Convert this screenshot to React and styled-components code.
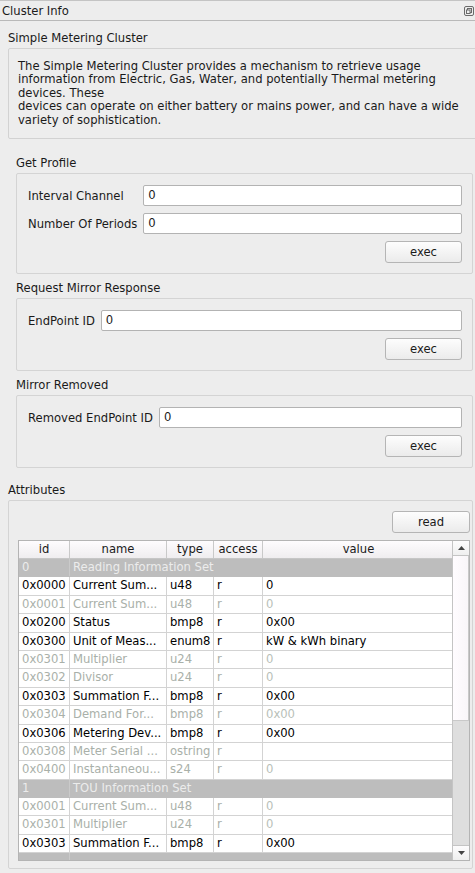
import React from "react";
import styled, { createGlobalStyle } from "styled-components";

const GlobalStyle = createGlobalStyle`
  html, body {
    margin: 0;
    padding: 0;
    background: #ededed;
  }
  body {
    font-family: "DejaVu Sans", "Liberation Sans", sans-serif;
    font-size: 11.6px;
    color: #1a1a1a;
  }
`;

const Page = styled.div`
  width: 475px;
  height: 873px;
  overflow: hidden;
  background: #ededed;
  display: flex;
  flex-direction: column;
`;

const TitleBar = styled.div`
  height: 19px;
  border-top: 1px solid #c4c4c4;
  border-bottom: 1px solid #b9b9b9;
  display: flex;
  align-items: center;
  justify-content: space-between;
  padding: 0 1px 0 2px;
`;

const Content = styled.div`
  padding: 0 0 0 8px;
  display: flex;
  flex-direction: column;
  overflow: hidden;
`;

const SectionLabel = styled.div`
  height: 20px;
  line-height: 20px;
  margin-left: ${(p) => p.indent || 0}px;
  margin-top: ${(p) => p.top || 0}px;
  white-space: nowrap;
`;

const DescBox = styled.div`
  width: 480px;
  box-sizing: border-box;
  height: 91px;
  border: 1px solid #d2d2d2;
  border-radius: 2px;
  padding: 11px 0 0 9px;
  line-height: 13.4px;
  white-space: nowrap;
`;

const GroupBox = styled.div`
  margin-left: ${(p) => p.indent || 0}px;
  width: ${(p) => p.width}px;
  box-sizing: border-box;
  border: 1px solid #d4d4d4;
  border-radius: 2px;
  padding: ${(p) => p.pad || "11px 10px 10px 11px"};
  display: flex;
  flex-direction: column;
  gap: 7px;
`;

const FieldGrid = styled.div`
  display: grid;
  grid-template-columns: auto 1fr;
  column-gap: 6px;
  row-gap: 7px;
  align-items: center;
`;

const FieldLabel = styled.span`
  white-space: nowrap;
`;

const Input = styled.div`
  height: 21px;
  box-sizing: border-box;
  background: #fff;
  border: 1px solid #b3b3b3;
  border-radius: 2px;
  padding-left: 4px;
  line-height: 19px;
`;

const Button = styled.div`
  align-self: flex-end;
  width: ${(p) => p.w || 77}px;
  height: 22px;
  box-sizing: border-box;
  border: 1px solid #b5b5b5;
  border-radius: 3px;
  background: linear-gradient(#fdfdfd, #ebebeb);
  text-align: center;
  line-height: 20px;
`;

const AttrBox = styled.div`
  height: 369px;
  width: 465px;
  box-sizing: border-box;
  border: 1px solid #d4d4d4;
  border-radius: 2px;
  padding: 10px 2px 0 9px;
  display: flex;
  flex-direction: column;
  gap: 7px;
`;

const TableFrame = styled.div`
  height: 321px;
  box-sizing: border-box;
  border: 1px solid #b4b4b4;
  display: flex;
  overflow: hidden;
  background: #fff;
`;

const TableBody = styled.div`
  width: 435px;
  display: flex;
  flex-direction: column;
  overflow: hidden;
`;

const COLS = "51px 97px 47px 49px 191px";

const HeaderRow = styled.div`
  display: grid;
  grid-template-columns: ${COLS};
  height: 18px;
  flex: none;
  background: linear-gradient(#fefcfe, #efedef);
  border-bottom: 1px solid #c6c6c6;
  box-sizing: border-box;
`;

const HeaderCell = styled.div`
  text-align: center;
  line-height: 17px;
  border-right: 1px solid #c9c9c9;
  &:last-child {
    border-right: none;
  }
`;

const Row = styled.div`
  display: grid;
  grid-template-columns: ${COLS};
  height: 18.4px;
  flex: none;
  box-sizing: border-box;
  background: ${(p) => (p.group ? "#bdbdbd" : "#fff")};
  border-bottom: 1px solid ${(p) => (p.group ? "#bdbdbd" : "#d3d3d3")};
  color: ${(p) => (p.group ? "#ececec" : p.dim ? "#a9b0a9" : "#000")};
`;

const Cell = styled.div`
  padding-left: 3px;
  line-height: 17.4px;
  white-space: nowrap;
  overflow: hidden;
  border-right: 1px solid ${(p) => (p.group ? "#cacaca" : "#d3d3d3")};
  grid-column: ${(p) => p.span || "auto"};
  color: ${(p) => (p.faint ? "#b8c0b8" : "inherit")};
  &:last-child {
    border-right: none;
  }
`;

const Scrollbar = styled.div`
  width: 16px;
  border-left: 1px solid #c4c4c4;
  background: #dedede;
  display: flex;
  flex-direction: column;
`;

const ScrollButton = styled.div`
  height: 14px;
  flex: none;
  background: linear-gradient(#fdfcfd, #efefef);
  border-bottom: ${(p) => (p.down ? "none" : "1px solid #c4c4c4")};
  border-top: ${(p) => (p.down ? "1px solid #c4c4c4" : "none")};
  display: flex;
  align-items: center;
  justify-content: center;
`;

const Handle = styled.div`
  height: 165px;
  flex: none;
  box-sizing: border-box;
  background: linear-gradient(90deg, #fffcff, #f9f6f9);
  border: 1px solid #c9c9c9;
  border-top: none;
  border-left: none;
`;

const Track = styled.div`
  flex: 1;
`;

const FloatIcon = () => (
  <svg width="10" height="10" viewBox="0 0 10 10">
    <rect x="0.5" y="0.5" width="9" height="9" rx="1.5" fill="none" stroke="#6a6a6a" />
    <rect x="3.5" y="2.5" width="4" height="4" fill="none" stroke="#6a6a6a" />
    <rect x="2.5" y="4" width="3.5" height="3.5" fill="#ededed" stroke="#6a6a6a" />
  </svg>
);

const Arrow = ({ down }) => (
  <svg width="7" height="4" viewBox="0 0 7 4">
    <polygon points={down ? "0,0 7,0 3.5,4" : "0,4 7,4 3.5,0"} fill="#444" />
  </svg>
);

const rows = [
  { group: true, id: "0", name: "Reading Information Set" },
  { id: "0x0000", name: "Current Sum...", type: "u48", access: "r", value: "0" },
  { id: "0x0001", name: "Current Sum...", type: "u48", access: "r", value: "0", dim: true },
  { id: "0x0200", name: "Status", type: "bmp8", access: "r", value: "0x00" },
  { id: "0x0300", name: "Unit of Meas...", type: "enum8", access: "r", value: "kW & kWh binary" },
  { id: "0x0301", name: "Multiplier", type: "u24", access: "r", value: "0", dim: true },
  { id: "0x0302", name: "Divisor", type: "u24", access: "r", value: "0", dim: true },
  { id: "0x0303", name: "Summation F...", type: "bmp8", access: "r", value: "0x00" },
  { id: "0x0304", name: "Demand For...", type: "bmp8", access: "r", value: "0x00", dim: true },
  { id: "0x0306", name: "Metering Dev...", type: "bmp8", access: "r", value: "0x00" },
  { id: "0x0308", name: "Meter Serial ...", type: "ostring", access: "r", value: "", dim: true },
  { id: "0x0400", name: "Instantaneou...", type: "s24", access: "r", value: "0", dim: true },
  { group: true, id: "1", name: "TOU Information Set" },
  { id: "0x0001", name: "Current Sum...", type: "u48", access: "r", value: "0", dim: true },
  { id: "0x0301", name: "Multiplier", type: "u24", access: "r", value: "0", dim: true },
  { id: "0x0303", name: "Summation F...", type: "bmp8", access: "r", value: "0x00" },
  { group: true, id: "", name: "" },
];

export default function App() {
  return (
    <Page>
      <GlobalStyle />
      <TitleBar>
        <span>Cluster Info</span>
        <FloatIcon />
      </TitleBar>
      <Content>
        <SectionLabel top={7}>Simple Metering Cluster</SectionLabel>
        <DescBox>
          The Simple Metering Cluster provides a mechanism to retrieve usage
          <br />
          information from Electric, Gas, Water, and potentially Thermal metering
          <br />
          devices. These
          <br />
          devices can operate on either battery or mains power, and can have a wide
          <br />
          variety of sophistication.
        </DescBox>

        <SectionLabel indent={8} top={14}>Get Profile</SectionLabel>
        <GroupBox indent={8} width={457}>
          <FieldGrid>
            <FieldLabel>Interval Channel</FieldLabel>
            <Input>0</Input>
            <FieldLabel>Number Of Periods</FieldLabel>
            <Input>0</Input>
          </FieldGrid>
          <Button>exec</Button>
        </GroupBox>

        <SectionLabel indent={8} top={4}>Request Mirror Response</SectionLabel>
        <GroupBox indent={8} width={457}>
          <FieldGrid>
            <FieldLabel>EndPoint ID</FieldLabel>
            <Input>0</Input>
          </FieldGrid>
          <Button>exec</Button>
        </GroupBox>

        <SectionLabel indent={8} top={4}>Mirror Removed</SectionLabel>
        <GroupBox indent={8} width={457}>
          <FieldGrid>
            <FieldLabel>Removed EndPoint ID</FieldLabel>
            <Input>0</Input>
          </FieldGrid>
          <Button>exec</Button>
        </GroupBox>

        <SectionLabel top={12}>Attributes</SectionLabel>
        <AttrBox>
          <Button w={78}>read</Button>
          <TableFrame>
            <TableBody>
              <HeaderRow>
                <HeaderCell>id</HeaderCell>
                <HeaderCell>name</HeaderCell>
                <HeaderCell>type</HeaderCell>
                <HeaderCell>access</HeaderCell>
                <HeaderCell>value</HeaderCell>
              </HeaderRow>
              {rows.map((r, i) =>
                r.group ? (
                  <Row key={i} group>
                    <Cell group>{r.id}</Cell>
                    <Cell group span="2 / 6">{r.name}</Cell>
                  </Row>
                ) : (
                  <Row key={i} dim={r.dim}>
                    <Cell>{r.id}</Cell>
                    <Cell>{r.name}</Cell>
                    <Cell>{r.type}</Cell>
                    <Cell>{r.access}</Cell>
                    <Cell faint={r.dim}>{r.value}</Cell>
                  </Row>
                )
              )}
            </TableBody>
            <Scrollbar>
              <ScrollButton>
                <Arrow />
              </ScrollButton>
              <Handle />
              <Track />
              <ScrollButton down>
                <Arrow down />
              </ScrollButton>
            </Scrollbar>
          </TableFrame>
        </AttrBox>
      </Content>
    </Page>
  );
}
